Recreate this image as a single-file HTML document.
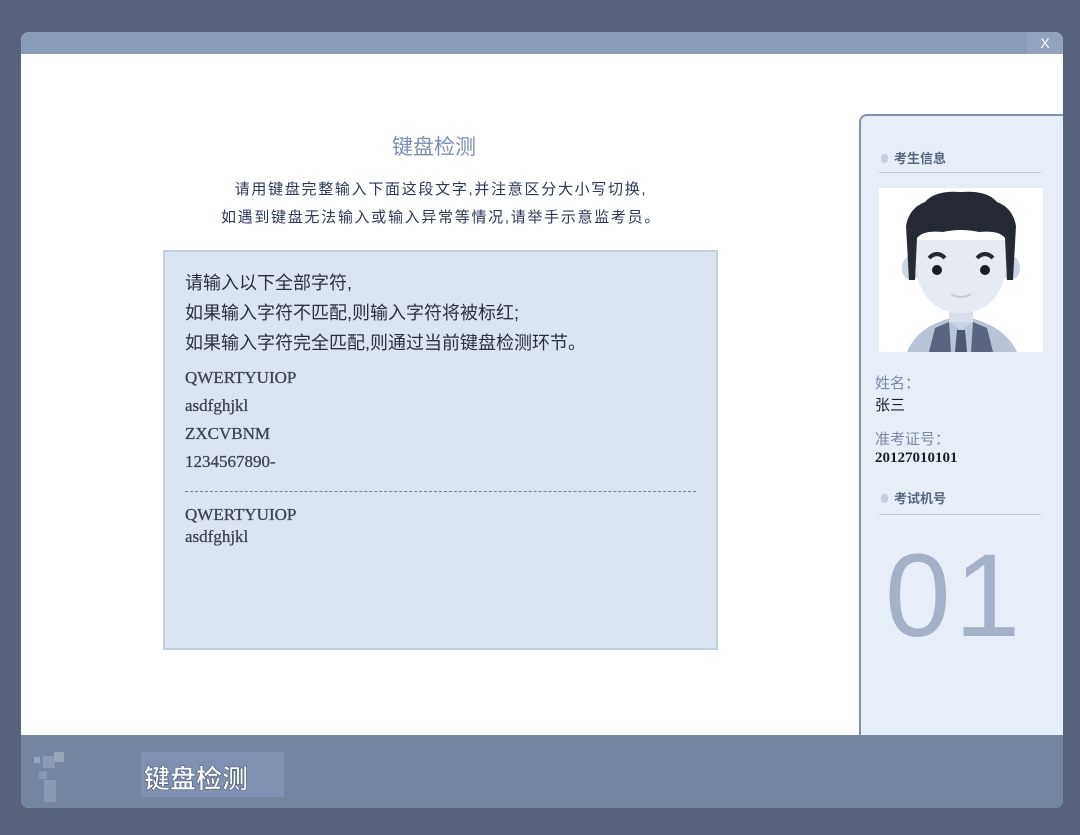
<!DOCTYPE html>
<html><head><meta charset="utf-8"><style>
*{margin:0;padding:0;box-sizing:border-box}
body{width:1080px;height:835px;background:#58637b;position:relative;overflow:hidden;font-family:"Liberation Sans","Noto Sans CJK SC",sans-serif}
.win{position:absolute;left:21px;top:32px;width:1042px;height:776px;border-radius:8px;overflow:hidden;background:#fff}
.tb{position:absolute;left:0;top:0;width:100%;height:22px;background:#8a9bb8}
.x{position:absolute;right:0;top:0;width:36px;height:22px;background:#93a3bf;color:#fff;font-size:14px;text-align:center;line-height:22px}
.foot{position:absolute;left:0;top:703px;width:100%;height:73px;background:#75849f}
.t1{position:absolute;left:0;width:826px;text-align:center;top:99px;font-size:21px;color:#7b8db3}
.ins{position:absolute;left:0;width:840px;text-align:center;font-size:15px;color:#2d3a55;letter-spacing:1.7px}
.box{position:absolute;left:142px;top:218px;width:555px;height:400px;background:#dbe5f2;border:2px solid #c2cfe0;padding:16px 20px;color:#333}
.cn{font-size:18px;line-height:30px;color:#2a2f3c}
.en{font-family:"Liberation Serif",serif;font-size:17px;color:#3d4252;-webkit-text-stroke:0.3px #3d4252}
.rp{position:absolute;left:838px;top:82px;width:210px;height:640px;background:#e8eef8;border:2px solid #8291ae;border-radius:8px 0 0 0}
.h{position:absolute;left:20px;font-size:13px;font-weight:bold;color:#5a6680}
.h:before{content:"";display:inline-block;width:7px;height:9px;border-radius:4px;background:#c5cfde;margin-right:6px}
.ln{position:absolute;left:18px;width:162px;height:1px;background:#c2cbd9}
</style></head><body>
<div class="win">
<div class="tb"><div class="x">X</div></div>
<div class="t1">键盘检测</div>
<div class="ins" style="top:146px">请用键盘完整输入下面这段文字,并注意区分大小写切换,</div>
<div class="ins" style="top:174px">如遇到键盘无法输入或输入异常等情况,请举手示意监考员。</div>
<div class="box">
<div class="cn">请输入以下全部字符,<br>如果输入字符不匹配,则输入字符将被标红;<br>如果输入字符完全匹配,则通过当前键盘检测环节。</div>
<div class="en" style="line-height:28px;margin-top:6px">QWERTYUIOP<br>asdfghjkl<br>ZXCVBNM<br>1234567890-</div>
<div style="border-top:1px dashed #7b8495;margin:15px 0 12px"></div>
<div class="en" style="line-height:22px">QWERTYUIOP<br>asdfghjkl</div>
</div>
<div class="rp">
<div class="h" style="top:32px">考生信息</div>
<div class="ln" style="top:56px"></div>
<div style="position:absolute;left:18px;top:72px;width:164px;height:164px;background:#fff;overflow:hidden">
<svg width="164" height="164" viewBox="0 0 164 164">
<path d="M28 164 Q40 135 82 128 Q124 135 138 164Z" fill="#b8c3d6"/>
<path d="M50 164 L56 140 L70 134 L72 164Z M114 164 L108 140 L94 134 L92 164Z" fill="#5c6580"/>
<path d="M70 134 L82 142 L94 134 L90 130 L74 130Z" fill="#c9d2e2"/>
<path d="M78 142 L86 142 L88 164 L76 164Z" fill="#4e5670"/>
<rect x="70" y="112" width="24" height="22" fill="#d8dfeb"/>
<ellipse cx="32" cy="80" rx="9" ry="12" fill="#ccd5e4"/><ellipse cx="132" cy="80" rx="9" ry="12" fill="#ccd5e4"/>
<path d="M34 52 Q34 125 82 125 Q130 125 130 52Z" fill="#e6ebf3"/>
<path d="M30 92 L27 38 Q30 20 46 14 Q56 2 82 4 Q108 2 118 14 Q134 20 137 38 L134 92 L128 92 L126 50 Q120 42 100 44 Q82 40 64 44 Q44 42 38 50 L36 92Z" fill="#262a35"/>
<path d="M50 70 Q58 62 66 70 M98 70 Q106 62 114 70" stroke="#262a35" stroke-width="4" fill="none"/>
<circle cx="58" cy="82" r="5" fill="#1a1d26"/><circle cx="106" cy="82" r="5" fill="#1a1d26"/>
<path d="M72 106 Q82 112 92 106" stroke="#c5cdda" stroke-width="2" fill="none"/>
</svg></div>
<div style="position:absolute;left:14px;top:256px;font-size:15px;color:#7c8aa6">姓名：</div>
<div style="position:absolute;left:14px;top:278px;font-size:15px;color:#1b1f2a">张三</div>
<div style="position:absolute;left:14px;top:312px;font-size:15px;color:#7c8aa6">准考证号：</div>
<div style="position:absolute;left:14px;top:334px;font-size:15px;font-weight:bold;color:#1b1f2a;font-family:'Liberation Serif',serif">20127010101</div>
<div class="h" style="top:372px">考试机号</div>
<div class="ln" style="top:398px"></div>
<div style="position:absolute;left:24px;top:412px;font-size:118px;color:#a5b1c7;letter-spacing:4px">01</div>
</div>
<div class="foot">
<div style="position:absolute;left:13px;top:22px;width:6px;height:6px;background:#95a2b9"></div>
<div style="position:absolute;left:22px;top:21px;width:12px;height:12px;background:#8d9ab3"></div>
<div style="position:absolute;left:33px;top:17px;width:10px;height:10px;background:#9aa6bc;border-radius:2px"></div>
<div style="position:absolute;left:18px;top:36px;width:8px;height:8px;background:#8896af"></div>
<div style="position:absolute;left:23px;top:45px;width:12px;height:22px;background:#8a98b1"></div>
<div style="position:absolute;left:120px;top:17px;width:143px;height:45px;background:#7f90b2"></div>
<div style="position:absolute;left:123px;top:24px;font-size:26px;font-weight:bold;color:#fff;-webkit-text-stroke:0.6px #4d5a78">键盘检测</div>
</div>
</div>
</body></html>
